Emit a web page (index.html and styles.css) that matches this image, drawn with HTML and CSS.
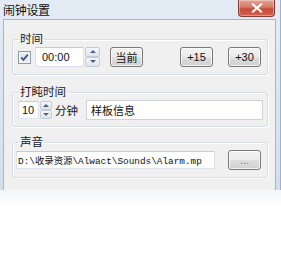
FILE: index.html
```html
<!DOCTYPE html>
<html lang="zh-CN">
<head>
<meta charset="utf-8">
<link rel="stylesheet" href="styles.css">
</head>
<body>
<div class="window">
  <div class="titlebar">
    <span class="title">闹钟设置</span>
    <div class="close"><svg width="12" height="10" viewBox="0 0 12 10"><path d="M2 1.5 L10 8.5 M10 1.5 L2 8.5" stroke="#fff" stroke-width="2.2" stroke-linecap="square"/></svg></div>
  </div>
  <div class="client">
    <fieldset class="group g-time">
      <legend>时间</legend>
      <div class="row">
        <span class="check"><svg width="13" height="13" viewBox="0 0 13 13"><rect x="0.5" y="0.5" width="12" height="12" fill="#f4f6f9" stroke="#8f9aa6"/><rect x="2.5" y="2.5" width="8" height="8" fill="#e2e8ef"/><path d="M3.2 6.4 L5.4 8.8 L9.8 3.6" fill="none" stroke="#3f5687" stroke-width="1.8"/></svg></span>
        <span class="input time">00:00</span>
        <span class="spin"><span class="sb up"></span><span class="sb down"></span></span>
        <button class="btn now">当前</button>
        <button class="btn plus15">+15</button>
        <button class="btn plus30">+30</button>
      </div>
    </fieldset>
    <fieldset class="group g-snooze">
      <legend>打盹时间</legend>
      <div class="row">
        <span class="input mins">10</span>
        <span class="spin small"><span class="sb up"></span><span class="sb down"></span></span>
        <span class="unit">分钟</span>
        <span class="input memo">样板信息</span>
      </div>
    </fieldset>
    <fieldset class="group g-sound">
      <legend>声音</legend>
      <div class="row">
        <span class="input path">D:\收录资源\Alwact\Sounds\Alarm.mp</span>
        <button class="btn browse">...</button>
      </div>
    </fieldset>
    <div class="actions">
      <button class="btn default" aria-label="确定"></button>
      <button class="btn" aria-label="取消"></button>
    </div>
  </div>
</div>
<div class="fade"></div>
</body>
</html>
```
FILE: styles.css
```css
html, body { margin: 0; padding: 0; background: #fff; }
body { width: 281px; height: 271px; overflow: hidden; font-family: "Noto Sans CJK SC", sans-serif; }

.window {
  width: 281px;
  height: 190px;
  overflow: hidden;
  box-sizing: border-box;
  display: flex;
  flex-direction: column;
  background: linear-gradient(#e3ebf5, #d3dfee);
  padding: 0 4px 0 3px;
  border-right: 1px solid #9fb2c9;
}

.titlebar {
  height: 19px;
  flex: none;
  display: flex;
  align-items: flex-start;
  justify-content: space-between;
  margin-left: -3px;
  margin-right: -4px;
  padding-left: 3px;
  padding-right: 5px;
}
.title {
  font-size: 12px;
  line-height: 19px;
  color: #111;
  letter-spacing: -0.3px;
}
.close {
  width: 37px;
  height: 17px;
  box-sizing: border-box;
  border: 1px solid #8a3a33;
  border-top: none;
  border-radius: 0 0 4px 4px;
  background: linear-gradient(#e6a394 0%, #d67866 45%, #c64d3b 55%, #d2614c 100%);
  box-shadow: inset 0 0 0 1px rgba(255,255,255,0.35);
  display: flex;
  align-items: center;
  justify-content: center;
}

.client {
  flex: 1;
  background: #f0f0f0;
  border: 1px solid #a7b7ca;
  border-bottom: none;
  padding: 0 7px 0 8px;
  display: flex;
  flex-direction: column;
}

.group {
  margin: 0;
  padding: 0 6px 7px 5px;
  border: 1px solid #d5dfe5;
  border-radius: 3px;
  box-shadow: inset 1px 1px 0 #fff, 1px 1px 0 #fff;
  min-inline-size: 0;
}
.group legend {
  font-size: 11.5px;
  line-height: 14px;
  padding: 0 1px 2px;
  margin-left: 1px;
  color: #15202c;
}
.g-time { margin-top: 11px; }
.g-snooze { margin-top: 9px; padding-bottom: 6px; }
.g-sound { margin-top: 7px; padding-bottom: 7px; }

.row {
  display: flex;
  align-items: center;
  height: 20px;
}

.check { display: flex; flex: none; width: 13px; height: 13px; margin-right: 4px; }

.input {
  box-sizing: border-box;
  flex: none;
  background: #fff;
  border: 1px solid #dde3ea;
  border-top-color: #c6ccd3;
  font-family: "Liberation Sans", Arial, sans-serif;
  font-size: 11px;
  color: #111;
  display: flex;
  align-items: center;
  white-space: nowrap;
}
.time { width: 49px; height: 20px; padding-left: 6px; }
.mins { width: 21px; height: 18px; padding-left: 3px; }
.memo {
  width: 177px; height: 20px; margin-left: 8px; padding-left: 4px;
  font-family: "Noto Sans CJK SC", sans-serif; font-size: 11px;
  border-color: #cdd3d9;
}
.path {
  width: 199px; height: 18px; margin-left: -2px; padding-left: 1px;
  font-family: "Liberation Mono", "Noto Sans CJK SC", monospace;
  font-size: 9.4px;
  overflow: hidden;
}

.spin {
  display: flex;
  flex: none;
  flex-direction: column;
  width: 15px;
  height: 20px;
  margin-left: 1px;
}
.spin.small { width: 12px; height: 18px; }
.sb {
  flex: 1;
  box-sizing: border-box;
  border: 1px solid #c4ccd6;
  border-radius: 2px;
  background: linear-gradient(#f5f7fa, #dfe5ec);
  position: relative;
}
.sb::after {
  content: "";
  position: absolute;
  left: 50%;
  top: 50%;
  margin-left: -3px;
  margin-top: -2px;
  border-left: 3px solid transparent;
  border-right: 3px solid transparent;
}
.up::after { border-bottom: 3px solid #4d6185; }
.down::after { border-top: 3px solid #4d6185; }

.unit {
  flex: none;
  white-space: nowrap;
  font-size: 11.5px;
  color: #15202c;
  margin-left: 3px;
}

.btn {
  box-sizing: border-box;
  flex: none;
  height: 20px;
  width: 33px;
  padding: 0;
  border: 1px solid #7a7a7a;
  border-radius: 3px;
  background: linear-gradient(#f3f3f3 0%, #ebebeb 48%, #dedede 52%, #d0d0d0 100%);
  box-shadow: inset 0 0 0 1px rgba(255,255,255,0.7);
  font-family: "Liberation Sans", Arial, sans-serif;
  font-size: 11px;
  color: #111;
}
.now { margin-left: 10px; font-family: "Noto Sans CJK SC", sans-serif; }
.plus15 { margin-left: auto; }
.plus30 { margin-left: 15px; }
.browse { margin-left: auto; color: #777; }

.actions {
  display: flex;
  margin-top: 13px;
  margin-left: 42px;
  gap: 9px;
}
.actions .btn { width: 82px; height: 23px; }
.actions .default { border-color: #3c7fb1; box-shadow: inset 0 0 0 1px #48d2fc; }

.fade {
  height: 16px;
  background: linear-gradient(#f3f5f8, #fff);
}
```
